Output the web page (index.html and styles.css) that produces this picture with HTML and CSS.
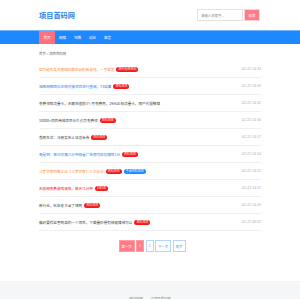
FILE: index.html
```html
<!DOCTYPE html>
<html lang="zh">
<head>
<meta charset="utf-8">
<title>项目首码网</title>
<link rel="stylesheet" href="styles.css">
</head>
<body>
<header class="header">
  <div class="wrap header-inner">
    <div class="logo">项目首码网</div>
    <form class="search">
      <input class="search-input" type="text" placeholder="请输入关键字...">
      <button class="search-btn" type="button">搜索</button>
    </form>
  </div>
</header>
<nav class="nav">
  <div class="wrap nav-inner">
    <a class="nav-item active">首页</a>
    <a class="nav-item">网赚</a>
    <a class="nav-item">地摊</a>
    <a class="nav-item">副业</a>
    <a class="nav-item">留言</a>
  </div>
</nav>
<main class="wrap">
  <div class="crumb">首页 &gt; 项目首码网</div>
  <ul class="list">
    <li class="row"><span class="title"><a class="t orange">室内逃生类主播网红都在玩的新游戏，一手首发</a><span class="badge red">限时抢购首码</span></span><span class="date">02-22 14:34</span></li>
    <li class="row"><span class="title"><a class="t blue">地图网图团队定制对接项目进行查阅，T4结算</a><span class="badge red">首码项目</span></span><span class="date">02-22 14:33</span></li>
    <li class="row"><span class="title"><a class="t">免费领取流量卡，无需充值前3个月免费用，29元正规流量卡，即产代理躺赚</a></span><span class="date">02-22 14:32</span></li>
    <li class="row"><span class="title"><a class="t">10000+项目商城项目永久会员免费领</a><span class="badge red">首码项目</span></span><span class="date">02-22 14:30</span></li>
    <li class="row"><span class="title"><a class="t">悉晓生活：注册实名认证送米券</a><span class="badge red">首码项目</span></span><span class="date">02-22 14:17</span></li>
    <li class="row"><span class="title"><a class="t blue">亮是啊：每日仅需几分钟观看广告即可轻松赚取1元</a><span class="badge red">首码项目</span></span><span class="date">02-22 14:14</span></li>
    <li class="row"><span class="title"><a class="t orange">斗罗世界同款立出《斗罗世界》三大玩法</a><span class="badge red">首码项目</span><span class="badge bblue">手游首码项目</span></span><span class="date">02-22 14:12</span></li>
    <li class="row"><span class="title"><a class="t red-t">无极网免费游戏来啦，每天几分钟</a><span class="badge red">扫码项</span></span><span class="date">02-22 14:11</span></li>
    <li class="row"><span class="title"><a class="t">新行业，社区老大哥了钱啊</a><span class="badge red">首码项目</span></span><span class="date">02-22 14:09</span></li>
    <li class="row"><span class="title"><a class="t">做好要有监管局高的一个项目，下载量较慢有钱能赚钱可以</a><span class="badge red">首码项目</span></span><span class="date">02-21 09:22</span></li>
  </ul>
  <div class="pager">
    <a class="pg on wide">第一页</a>
    <a class="pg on">1</a>
    <a class="pg">2</a>
    <a class="pg wide">下一页</a>
    <a class="pg mid">尾页</a>
  </div>
</main>
<footer class="footer">
  <div class="foot-text"><span>网站地图</span><span>©项目首码网</span></div>
</footer>
</body>
</html>
```

FILE: styles.css
```css
* { box-sizing: border-box; margin: 0; padding: 0; }
body {
  font-family: "Noto Sans CJK SC", "Liberation Sans", sans-serif;
  background: #fff;
  color: #333;
  width: 300px;
  height: 300px;
  overflow: hidden;
}
.wrap { width: 222px; margin: 0 auto; }
.header { height: 30px; }
.header-inner {
  height: 30px;
  display: flex;
  align-items: center;
  justify-content: space-between;
}
.logo {
  font-size: 7.2px;
  font-weight: 700;
  color: #2a86e8;
  line-height: 10px;
}
.search { display: flex; margin-right: 1px; }
.search-input {
  width: 46px;
  height: 12px;
  border: 1px solid #e2e2e2;
  font-size: 3.4px;
  padding: 0 3px;
  color: #999;
  font-family: inherit;
  outline: none;
}
.search-input::placeholder { color: #888; }
.search-btn {
  width: 16px;
  height: 12px;
  margin-left: 1px;
  border: 1px solid #ffd0d4;
  background: #ff7b86;
  color: #fff;
  font-size: 3.4px;
  font-family: inherit;
}
.nav {
  height: 14px;
  background: #1e88ff;
  border-top: 1px solid #74b6ff;
}
.nav-inner { display: flex; height: 13px; }
.nav-item {
  display: flex;
  align-items: center;
  justify-content: center;
  width: 15px;
  font-size: 3.5px;
  color: #fff;
}
.nav-item.active { background: #ff717e; width: 16px; }
.crumb {
  font-size: 3.4px;
  color: #666;
  height: 9px;
  line-height: 9px;
  margin-top: 5px;
}
.list { list-style: none; margin-top: 3px; }
.row {
  display: flex;
  align-items: center;
  justify-content: space-between;
  height: 17px;
  border-bottom: 1px solid #f0f0f0;
}
.title { display: flex; align-items: center; }
.t { font-size: 3.6px; color: #444; white-space: nowrap; }
.t.orange { color: #ff8a3c; }
.t.blue { color: #2a86e8; }
.t.red-t { color: #f01414; }
.badge {
  font-size: 3px;
  color: #fff;
  padding: 0 2px;
  height: 5px;
  line-height: 5px;
  border-radius: 2.5px;
  margin-left: 2px;
  white-space: nowrap;
}
.badge.red { background: #f41a1a; }
.badge.bblue { background: #1e88ff; }
.date { font-size: 3.6px; color: #aaa; font-family: "Liberation Sans", sans-serif; }
.pager {
  display: flex;
  justify-content: center;
  gap: 1.5px;
  margin-top: 9px;
  margin-left: 4px;
}
.pg {
  height: 12px;
  width: 8px;
  display: flex;
  align-items: center;
  justify-content: center;
  font-size: 3.4px;
  color: #4c9cff;
  border: 1px solid #b3d5ff;
  font-family: "Liberation Sans", "Noto Sans CJK SC", sans-serif;
}
.pg.wide { width: 16px; }
.pg.mid { width: 13px; }
.pg.on { background: #ff7b86; border-color: #ff9ba3; color: #fff; }
.footer {
  margin-top: 29px;
  background: #f5f6f8;
  height: 18px;
  padding-top: 15px;
  overflow: hidden;
}
.foot-text {
  display: flex;
  justify-content: center;
  gap: 8px;
  font-size: 3.4px;
  line-height: 5px;
  color: #888;
}
```
